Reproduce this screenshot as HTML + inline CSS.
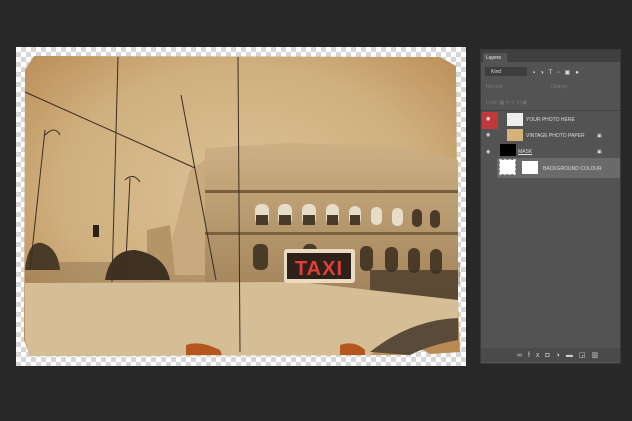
<!DOCTYPE html>
<html><head><style>
body{margin:0;width:632px;height:421px;background:#282828;position:relative;overflow:hidden;font-family:"Liberation Sans",sans-serif}
.chk{position:absolute;left:16px;top:47px;width:450px;height:319px;background:#fff repeating-conic-gradient(#d6d6d6 0 25%,#fff 0 50%) 0 0/10px 10px}
.panel{position:absolute;left:480px;top:49px;width:139px;height:313px;background:#535353;border:1px solid #3a3a3a}
.t{position:absolute;font-size:5px;color:#ddd}
</style></head><body>
<div class="chk"></div>
<svg style="position:absolute;left:0;top:0" width="632" height="421">
<defs>
<radialGradient id="p" cx=".5" cy=".45" r=".7"><stop offset="0" stop-color="#dcc196"/><stop offset=".6" stop-color="#cfaf7e"/><stop offset="1" stop-color="#b98a52"/></radialGradient>
<linearGradient id="c" x1="0" y1="0" x2="0" y2="1"><stop offset="0" stop-color="#cdb083"/><stop offset="1" stop-color="#a1825a"/></linearGradient>
</defs>
<path d="M34 56 L440 57 L456 66 L458 300 L460 352 L430 354 L420 348 L410 355 L30 356 L24 340 L25 70 Z" fill="url(#p)"/>
<rect x="25" y="262" width="435" height="22" fill="#8f7450" opacity=".5"/>
<path d="M205 148 L290 143 L400 146 L458 160 L458 300 L205 290 Z" fill="url(#c)"/>
<path d="M172 240 L190 170 L205 160 L205 275 L172 275 Z" fill="#c9aa7e"/>
<path d="M147 230 L170 225 L175 275 L147 275 Z" fill="#b59468"/>
<rect x="205" y="190" width="253" height="3" fill="#7a6040"/>
<rect x="205" y="232" width="253" height="3" fill="#7a6040"/>
<g fill="#e6dcc8">
<rect x="255" y="204" width="14" height="21" rx="6"/><rect x="278" y="204" width="14" height="21" rx="6"/><rect x="302" y="204" width="14" height="21" rx="6"/><rect x="326" y="204" width="13" height="21" rx="6"/><rect x="349" y="206" width="12" height="19" rx="6"/><rect x="371" y="207" width="11" height="18" rx="5"/><rect x="392" y="208" width="11" height="18" rx="5"/>
</g>
<g fill="#4a3a28"><rect x="256" y="215" width="12" height="10"/><rect x="279" y="215" width="12" height="10"/><rect x="303" y="215" width="12" height="10"/><rect x="327" y="215" width="11" height="10"/><rect x="350" y="215" width="10" height="10"/><rect x="412" y="209" width="10" height="18" rx="5"/><rect x="430" y="210" width="10" height="18" rx="5"/>
<rect x="253" y="244" width="15" height="26" rx="6"/><rect x="303" y="244" width="14" height="26" rx="6"/><rect x="360" y="246" width="13" height="25" rx="6"/><rect x="385" y="247" width="13" height="25" rx="6"/><rect x="408" y="248" width="12" height="25" rx="6"/><rect x="430" y="249" width="12" height="25" rx="6"/>
</g>
<rect x="370" y="270" width="88" height="30" fill="#3d3024" opacity=".7"/>
<path d="M25 270 Q28 240 42 243 Q58 248 60 270 Z" fill="#4a3b28"/>
<path d="M105 280 Q110 250 135 250 Q165 255 170 280 Z" fill="#3e3122"/>
<path d="M25 283 L300 282 L458 300 L458 330 Q410 330 370 355 L30 356 L25 340 Z" fill="#d5bd95"/>
<path d="M370 352 Q410 320 458 318 L458 340 Q430 345 410 355 Z" fill="#5a4a3a"/>
<path d="M186 345 Q200 340 220 350 L222 355 L186 355 Z" fill="#b5561e"/>
<path d="M340 345 Q355 340 365 350 L365 355 L340 355 Z" fill="#b5561e"/>
<g stroke="#3c2d20" fill="none" stroke-width="1">
<line x1="118" y1="57" x2="112" y2="282"/><line x1="238" y1="57" x2="240" y2="352"/>
<line x1="181" y1="95" x2="216" y2="280"/><line x1="25" y1="92" x2="195" y2="168"/>
<line x1="30" y1="270" x2="45" y2="130"/><line x1="125" y1="280" x2="130" y2="178"/>
<path d="M45 135 Q55 125 60 135"/><path d="M125 180 Q133 172 140 182"/>
</g>
<rect x="93" y="225" width="6" height="12" fill="#2a2018"/>
<rect x="284" y="249" width="71" height="34" rx="3" fill="#eadbc2"/>
<rect x="287" y="253" width="64" height="26" fill="#2d211a"/>
<text x="319" y="275" text-anchor="middle" font-family="Liberation Sans" font-weight="bold" font-size="20" fill="#e0403a" letter-spacing="1">TAXI</text>
</svg>
<div class="panel">
<div style="position:absolute;left:0;top:0;width:139px;height:12px;background:#3f3f3f"></div>
<div style="position:absolute;left:2px;top:3px;width:24px;height:10px;background:#535353"></div>
<div class="t" style="left:5px;top:5px;color:#eee">Layers</div>
<div style="position:absolute;left:4px;top:17px;width:42px;height:9px;background:#3d3d3d"></div>
<div class="t" style="left:10px;top:19px">Kind</div>
<div style="position:absolute;left:52px;top:19px;width:80px;height:6px;color:#ddd;font-size:6px;letter-spacing:5px">▪◑T▫▣●</div>
<div class="t" style="left:5px;top:34px;color:#777">Normal</div>
<div class="t" style="left:70px;top:34px;color:#777">Opacity:</div>
<div class="t" style="left:5px;top:50px;color:#777">Lock: ▦ ✎ ✛ ⊡ ▣</div>
<div style="position:absolute;left:0;top:60px;width:139px;height:1px;background:#444"></div>
<div style="position:absolute;left:1px;top:62px;width:16px;height:17px;background:#c0393b"></div>
<div class="t" style="left:5px;top:66px;color:#fff">◉</div>
<div style="position:absolute;left:26px;top:63px;width:16px;height:13px;background:#eee"></div>
<div class="t" style="left:45px;top:67px">YOUR PHOTO HERE</div>
<div class="t" style="left:5px;top:82px">◉</div>
<div style="position:absolute;left:26px;top:79px;width:16px;height:12px;background:#d4b27a"></div>
<div class="t" style="left:45px;top:83px">VINTAGE PHOTO PAPER</div>
<div class="t" style="left:116px;top:83px">▣</div>
<div class="t" style="left:5px;top:99px">◉</div>
<div style="position:absolute;left:19px;top:94px;width:16px;height:12px;background:#000"></div>
<div class="t" style="left:37px;top:99px;text-decoration:underline">MASK</div>
<div class="t" style="left:116px;top:99px">▣</div>
<div style="position:absolute;left:16px;top:108px;width:123px;height:20px;background:#6a6a6a"></div>
<div style="position:absolute;left:19px;top:110px;width:15px;height:14px;background:#fff;outline:1px dashed #ccc"></div>
<div style="position:absolute;left:41px;top:111px;width:16px;height:13px;background:#fff"></div>
<div class="t" style="left:62px;top:116px">BACKGROUND COLOUR</div>
<div style="position:absolute;left:0;top:298px;width:139px;height:14px;background:#4a4a4a"></div>
<div style="position:absolute;left:36px;top:301px;font-size:7px;color:#ccc;letter-spacing:6px">∞fx◘◑▬◲▥</div>
</div>
</body></html>
